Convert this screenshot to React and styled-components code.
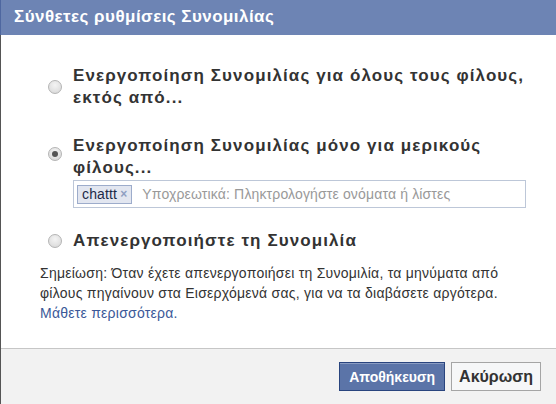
import React from "react"
import styled, { createGlobalStyle } from "styled-components"

const GlobalStyle = createGlobalStyle`
  html, body {
    margin: 0;
    padding: 0;
    background: #fff;
  }
  body {
    font-family: "Liberation Sans", Arial, sans-serif;
  }
`

const Dialog = styled.div`
  width: 556px;
  height: 404px;
  display: flex;
  flex-direction: column;
  box-sizing: border-box;
  border-left: 1px solid #555;
  background: #fff;
`

const Header = styled.div`
  height: 35px;
  flex: none;
  box-sizing: border-box;
  margin-left: -1px;
  border-left: 1px solid #4e67a0;
  background: #6d84b4;
  color: #fff;
  font-size: 17px;
  font-weight: bold;
  letter-spacing: 0.45px;
  padding: 7px 0 0 13px;
`

const Body = styled.div`
  flex: 1;
  padding: 30px 30px 0 39px;
`

const Options = styled.div`
  display: flex;
  flex-direction: column;
  padding-left: 8px;
`

const Option = styled.div`
  display: flex;
  align-items: flex-start;
  margin-bottom: ${(p) => p.$gap || 0}px;
`

const Radio = styled.span`
  flex: none;
  width: 14px;
  height: 14px;
  box-sizing: border-box;
  border-radius: 50%;
  border: 1px solid #b4b4b4;
  background: radial-gradient(circle at 50% 35%, #f4f4f4 0%, #e2e2e2 60%, #d2d2d2 100%);
  margin-top: ${(p) => p.$top}px;
  margin-right: 11px;
  display: flex;
  align-items: center;
  justify-content: center;

  &::after {
    content: "";
    display: ${(p) => (p.$checked ? "block" : "none")};
    width: 6px;
    height: 6px;
    border-radius: 50%;
    background: #555;
  }
`

const OptionBody = styled.div`
  flex: 1;
`

const Label = styled.div`
  font-size: 17px;
  font-weight: bold;
  letter-spacing: 1.1px;
  color: #333;
  line-height: 22px;
`

const TokenInput = styled.div`
  margin-top: 1px;
  height: 28px;
  box-sizing: border-box;
  border: 1px solid #bdc7d8;
  display: flex;
  align-items: center;
  padding: 0 3px;
  gap: 10px;
  font-size: 14px;
  letter-spacing: 0.15px;
`

const Token = styled.span`
  display: inline-flex;
  align-items: center;
  gap: 3px;
  height: 19px;
  box-sizing: border-box;
  padding: 0 4px 0 4px;
  background: #e2e6f0;
  border: 1px solid #9daccb;
  color: #1c2a47;
`

const TokenClose = styled.span`
  color: #8f9fc2;
  font-size: 12px;
  font-weight: bold;
`

const Placeholder = styled.span`
  color: #999;
`

const Note = styled.p`
  margin: 11px 0 0;
  font-size: 14px;
  letter-spacing: 0.25px;
  line-height: 20px;
  color: #333;
`

const Link = styled.a`
  color: #3b5998;
  text-decoration: none;
`

const Footer = styled.div`
  height: 56px;
  flex: none;
  box-sizing: border-box;
  border-top: 1px solid #c6c6c6;
  background: #f2f2f2;
  display: flex;
  justify-content: flex-end;
  align-items: flex-start;
  gap: 6px;
  padding: 13px 15px 0 0;
`

const Button = styled.button`
  height: 29px;
  box-sizing: border-box;
  font-family: inherit;
  font-weight: bold;
  cursor: pointer;
  padding: 0 ${(p) => (p.$primary ? 9 : 7)}px;
  font-size: ${(p) => (p.$primary ? 14 : 16)}px;
  color: ${(p) => (p.$primary ? "#fff" : "#333")};
  background: ${(p) => (p.$primary ? "#5b74a8" : "#f6f7f8")};
  border: 1px solid ${(p) => (p.$primary ? "#29447e" : "#a5a5a5")};
  box-shadow: ${(p) => (p.$primary ? "inset 0 1px 0 #8a9cc2" : "none")};
`

const App = () => {
  return (
    <>
      <GlobalStyle />
      <Dialog>
        <Header>Σύνθετες ρυθμίσεις Συνομιλίας</Header>
        <Body>
          <Options>
            <Option $gap={26}>
              <Radio $top={15} />
              <OptionBody>
                <Label>Ενεργοποίηση Συνομιλίας για όλους τους φίλους, εκτός από...</Label>
              </OptionBody>
            </Option>
            <Option $gap={22}>
              <Radio $top={12} $checked />
              <OptionBody>
                <Label>Ενεργοποίηση Συνομιλίας μόνο για μερικούς φίλους...</Label>
                <TokenInput>
                  <Token>
                    chattt <TokenClose>×</TokenClose>
                  </Token>
                  <Placeholder>Υποχρεωτικά: Πληκτρολογήστε ονόματα ή λίστες</Placeholder>
                </TokenInput>
              </OptionBody>
            </Option>
            <Option>
              <Radio $top={4} />
              <OptionBody>
                <Label>Απενεργοποιήστε τη Συνομιλία</Label>
              </OptionBody>
            </Option>
          </Options>
          <Note>
            Σημείωση: Όταν έχετε απενεργοποιήσει τη Συνομιλία, τα μηνύματα από φίλους πηγαίνουν
            στα Εισερχόμενά σας, για να τα διαβάσετε αργότερα.{" "}
            <Link href="#">Μάθετε περισσότερα.</Link>
          </Note>
        </Body>
        <Footer>
          <Button $primary>Αποθήκευση</Button>
          <Button>Ακύρωση</Button>
        </Footer>
      </Dialog>
    </>
  )
}

export default App
